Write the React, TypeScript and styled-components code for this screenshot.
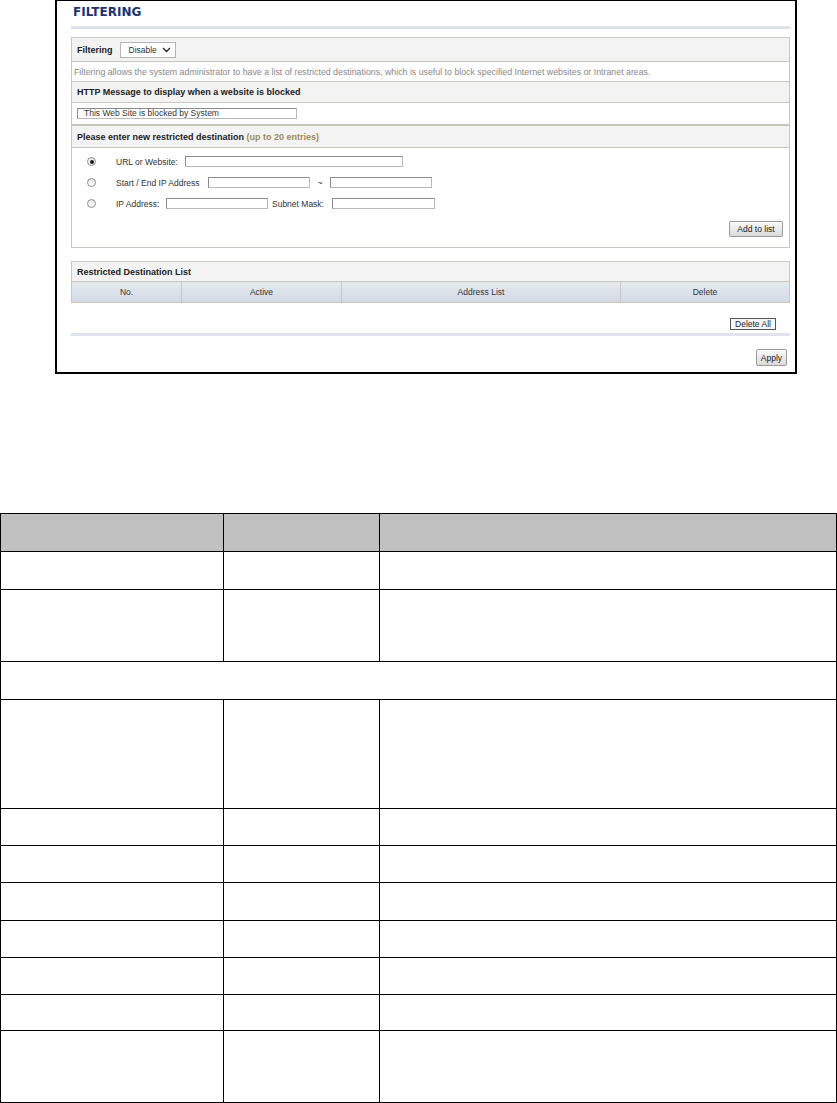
import React from 'react';
import styled, { createGlobalStyle } from 'styled-components';

const GlobalStyle = createGlobalStyle`
  html, body {
    margin: 0;
    padding: 0;
    background: #ffffff;
  }
  body {
    font-family: "Liberation Sans", Arial, sans-serif;
  }
`;

const Page = styled.div`
  width: 837px;
  height: 1103px;
  overflow: hidden;
`;

const Shot = styled.div`
  margin-left: 55px;
  width: 742px;
  height: 374px;
  box-sizing: border-box;
  border: 2px solid #000;
  border-top-width: 1px;
  padding: 0 5px 0 14px;
  display: flex;
  flex-direction: column;
  font-family: "Liberation Sans", Tahoma, sans-serif;
  color: #333;
`;

const Title = styled.h1`
  margin: 0;
  padding: 3px 0 0 2px;
  font-family: "DejaVu Sans", Verdana, sans-serif;
  font-size: 12px;
  line-height: 16px;
  font-weight: bold;
  color: #1b3571;
`;

const Separator = styled.div<{ $top: number }>`
  height: 3px;
  margin-top: ${p => p.$top}px;
  background: #dfe4ec;
`;

const Box = styled.div<{ $top?: number }>`
  border: 1px solid #cac6b9;
  margin-top: ${p => p.$top ?? 0}px;
  background: #fff;
`;

const Row = styled.div<{ $h: number; $shade?: boolean; $last?: boolean }>`
  height: ${p => p.$h}px;
  display: flex;
  align-items: center;
  padding-left: 5px;
  gap: 7px;
  background: ${p => (p.$shade ? '#f3f3f3' : '#fff')};
  border-bottom: ${p => (p.$last ? 'none' : '1px solid #cac6b9')};
`;

const Heading = styled.span`
  font-size: 9px;
  font-weight: bold;
  color: #222;
`;

const Note = styled.span`
  color: #9c8c5c;
`;

const Description = styled.span`
  font-size: 8.8px;
  color: #888;
  margin-left: -3px;
  white-space: nowrap;
`;

const Select = styled.div`
  width: 56px;
  height: 16px;
  box-sizing: border-box;
  border: 1px solid #b5b5b5;
  background: #fff;
  display: flex;
  align-items: center;
  gap: 5px;
  padding-left: 8px;
  font-size: 8.5px;
  color: #333;
`;

const TextField = styled.div<{ $w: number }>`
  width: ${p => p.$w}px;
  height: 11px;
  box-sizing: border-box;
  border: 1px solid #8c8c8c;
  border-right-color: #b8b8b8;
  border-bottom-color: #b8b8b8;
  background: #fff;
  font-size: 8.5px;
  line-height: 9px;
  padding-left: 6px;
  color: #333;
  white-space: nowrap;
`;

const Body = styled.div`
  padding: 3px 6px 10px 15px;
  display: flex;
  flex-direction: column;
`;

const OptionRow = styled.div`
  height: 21px;
  display: flex;
  align-items: center;
  font-size: 8.5px;
  color: #333;
`;

const Radio = styled.span<{ $on?: boolean }>`
  width: 9px;
  height: 9px;
  box-sizing: border-box;
  border-radius: 50%;
  border: 1px solid #8e8e8e;
  background: linear-gradient(#e8e8e8, #ffffff);
  margin-right: 20px;
  display: flex;
  align-items: center;
  justify-content: center;
  &::after {
    content: '';
    width: 4px;
    height: 4px;
    border-radius: 50%;
    background: ${p => (p.$on ? '#1a1a1a' : 'transparent')};
  }
`;

const Label = styled.span<{ $w: number; $center?: boolean; $pad?: number }>`
  width: ${p => p.$w}px;
  box-sizing: border-box;
  padding-left: ${p => p.$pad ?? 0}px;
  text-align: ${p => (p.$center ? 'center' : 'left')};
  white-space: nowrap;
`;

const ButtonLine = styled.div<{ $top: number; $right: number }>`
  display: flex;
  justify-content: flex-end;
  margin-top: ${p => p.$top}px;
  padding-right: ${p => p.$right}px;
`;

const Button = styled.div<{ $w: number; $h: number; $flat?: boolean }>`
  width: ${p => p.$w}px;
  height: ${p => p.$h}px;
  box-sizing: border-box;
  display: flex;
  align-items: center;
  justify-content: center;
  font-size: 8.5px;
  color: #222;
  border: 1px solid ${p => (p.$flat ? '#555' : '#9a9a9a')};
  border-radius: ${p => (p.$flat ? 0 : 2)}px;
  background: ${p => (p.$flat ? '#f6f6f6' : 'linear-gradient(#fafafa, #dadada)')};
`;

const ColumnHeads = styled.div`
  display: grid;
  grid-template-columns: 110px 160px 279px 1fr;
  height: 20px;
  background: linear-gradient(#e6eaf0, #d3dae4);
`;

const ColumnHead = styled.div<{ $last?: boolean }>`
  display: flex;
  align-items: center;
  justify-content: center;
  font-size: 8.5px;
  color: #333;
  border-right: ${p => (p.$last ? 'none' : '1px solid #c4c8cc')};
`;

const Legend = styled.table`
  margin-top: 139px;
  width: 837px;
  border-collapse: collapse;
  table-layout: fixed;
`;

const Cell = styled.td<{ $h: number; $head?: boolean }>`
  height: ${p => p.$h}px;
  padding: 0;
  border: 1.5px solid #000;
  background: ${p => (p.$head ? '#c0c0c0' : '#fff')};
`;

const Chevron = () => (
  <svg width="9" height="6" viewBox="0 0 9 6">
    <path d="M1 1 L4.5 4.5 L8 1" fill="none" stroke="#222" strokeWidth="1.3" />
  </svg>
);

const rowHeights = [37, 71, 37, 108, 36, 36, 37, 36, 36, 35, 71];

export default function App() {
  return (
    <Page>
      <GlobalStyle />
      <Shot>
        <Title>FILTERING</Title>
        <Separator $top={6} />

        <Box $top={8}>
          <Row $h={23} $shade>
            <Heading>Filtering</Heading>
            <Select>
              Disable <Chevron />
            </Select>
          </Row>
          <Row $h={19}>
            <Description>
              Filtering allows the system administrator to have a list of restricted destinations, which is useful to block specified Internet websites or Intranet areas.
            </Description>
          </Row>
          <Row $h={20} $shade>
            <Heading>HTTP Message to display when a website is blocked</Heading>
          </Row>
          <Row $h={21} $last>
            <TextField $w={220}>This Web Site is blocked by System</TextField>
          </Row>
        </Box>

        <Box>
          <Row $h={21} $shade>
            <Heading>
              Please enter new restricted destination <Note>(up to 20 entries)</Note>
            </Heading>
          </Row>
          <Body>
            <OptionRow>
              <Radio $on />
              <Label $w={69}>URL or Website:</Label>
              <TextField $w={218} />
            </OptionRow>
            <OptionRow>
              <Radio />
              <Label $w={92}>Start / End IP Address</Label>
              <TextField $w={102} />
              <Label $w={20} $center>~</Label>
              <TextField $w={102} />
            </OptionRow>
            <OptionRow>
              <Radio />
              <Label $w={50}>IP Address:</Label>
              <TextField $w={102} />
              <Label $w={64} $pad={4}>Subnet Mask:</Label>
              <TextField $w={103} />
            </OptionRow>
            <ButtonLine $top={7} $right={0}>
              <Button $w={54} $h={16}>Add to list</Button>
            </ButtonLine>
          </Body>
        </Box>

        <Box $top={13}>
          <Row $h={19} $shade>
            <Heading>Restricted Destination List</Heading>
          </Row>
          <ColumnHeads>
            <ColumnHead>No.</ColumnHead>
            <ColumnHead>Active</ColumnHead>
            <ColumnHead>Address List</ColumnHead>
            <ColumnHead $last>Delete</ColumnHead>
          </ColumnHeads>
        </Box>

        <ButtonLine $top={15} $right={14}>
          <Button $w={46} $h={12} $flat>Delete All</Button>
        </ButtonLine>
        <Separator $top={3} />
        <ButtonLine $top={13} $right={3}>
          <Button $w={31} $h={17}>Apply</Button>
        </ButtonLine>
      </Shot>

      <Legend>
        <colgroup>
          <col style={{ width: 223 }} />
          <col style={{ width: 156 }} />
          <col />
        </colgroup>
        <tbody>
          <tr>
            <Cell $h={37} $head />
            <Cell $h={37} $head />
            <Cell $h={37} $head />
          </tr>
          {rowHeights.map((h, i) =>
            i === 2 ? (
              <tr key={i}>
                <Cell $h={h} colSpan={3} />
              </tr>
            ) : (
              <tr key={i}>
                <Cell $h={h} />
                <Cell $h={h} />
                <Cell $h={h} />
              </tr>
            )
          )}
        </tbody>
      </Legend>
    </Page>
  );
}
